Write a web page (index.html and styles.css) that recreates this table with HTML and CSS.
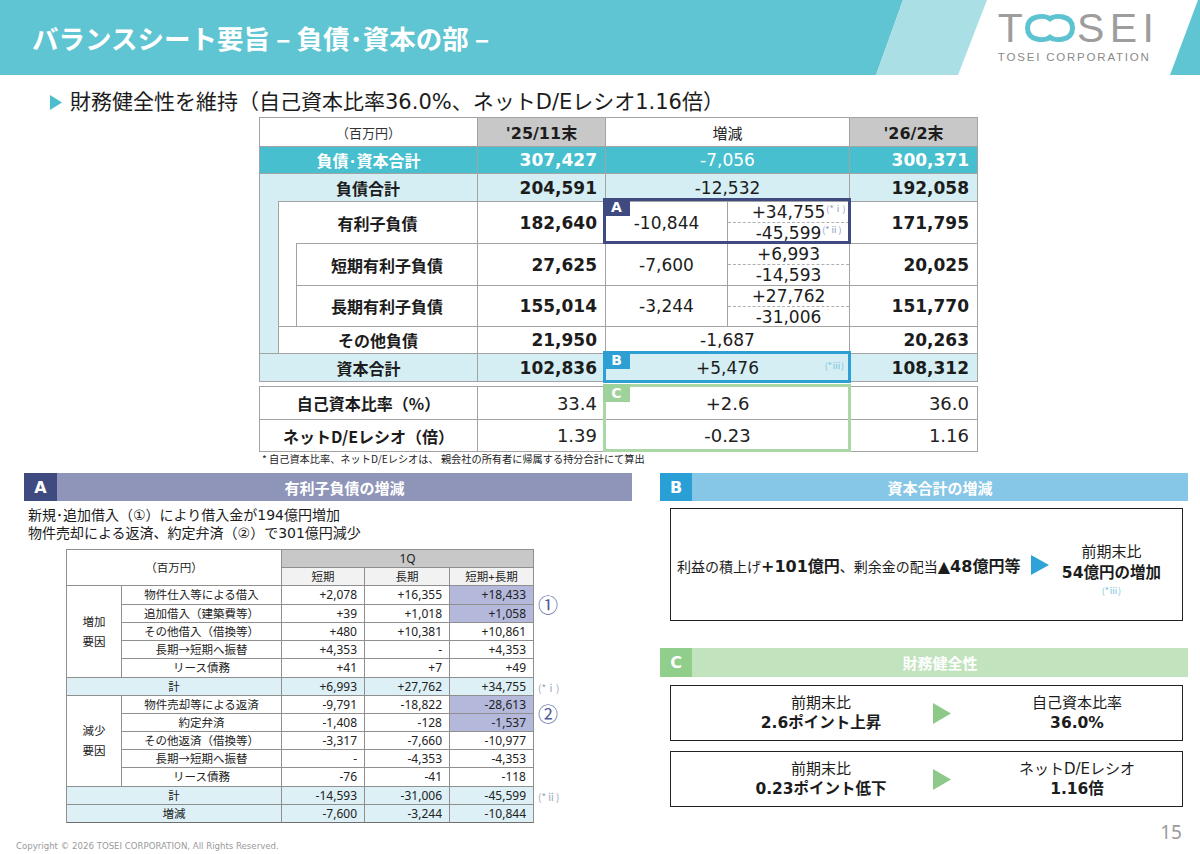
FILE: index.html
```html
<!DOCTYPE html>
<html lang="ja">
<head>
<meta charset="utf-8">
<title>バランスシート要旨 – 負債･資本の部 –</title>
<link rel="stylesheet" href="styles.css">
</head>
<body>
<div class="slide">
  <header class="hdr">
    <svg class="hdr-bg" width="1200" height="75" viewBox="0 0 1200 75" aria-hidden="true">
      <polygon points="0,0 903,0 876,75 0,75" fill="#5fc5d2"/>
      <polygon points="903,0 987,0 958,75 876,75" fill="#aadfe6"/>
      <polygon points="1198,0 1200,0 1200,75 1170,75" fill="#5fc5d2"/>
    </svg>
    <h1 class="title">バランスシート要旨 – 負債･資本の部 –</h1>
    <div class="logo">
      <div class="logo-mark"><span class="lm-t">T</span><svg class="lm-o" width="50" height="30" viewBox="0 0 50 30" aria-hidden="true"><path d="M25 5.8 C30 1.8 47.5 1.8 47.5 15 C47.5 28.2 30 28.2 25 24.2 C20 28.2 2.5 28.2 2.5 15 C2.5 1.8 20 1.8 25 5.8 Z" fill="none" stroke="#5ec3d0" stroke-width="5"/></svg><span class="lm-sei">SEI</span></div>
      <div class="logo-sub">TOSEI CORPORATION</div>
    </div>
  </header>

  <div class="lead"><svg class="lead-tri" width="12" height="15" viewBox="0 0 12 15" aria-hidden="true"><polygon points="0,0 12,7.5 0,15" fill="#4cbfcf"/></svg><span>財務健全性を維持（自己資本比率36.0%、ネットD/Eレシオ1.16倍）</span></div>

  <section class="bs">
    <div class="bsg">
      <div class="c s13 unit">（百万円）</div>
      <div class="c grey hb">'25/11末</div>
      <div class="c s56 hw">増減</div>
      <div class="c grey hb">'26/2末</div>

      <div class="c s13 teal lb">負債･資本合計</div>
      <div class="c teal num b">307,427</div>
      <div class="c teal s56">-7,056</div>
      <div class="c teal num b">300,371</div>

      <div class="c strip1"></div>
      <div class="c s23 lt lb lb-shift1">負債合計</div>
      <div class="c lt num b">204,591</div>
      <div class="c lt s56">-12,532</div>
      <div class="c lt num b">192,058</div>

      <div class="c strip2"></div>
      <div class="c lb lb-shift2">有利子負債</div>
      <div class="c num b">182,640</div>
      <div class="c">-10,844</div>
      <div class="c sub"><div class="sv sv-top"><span class="nv">+34,755<span class="fn">(*ⅰ)</span></span></div><div class="sv"><span class="nv">-45,599<span class="fn">(*ⅱ)</span></span></div></div>
      <div class="c num b">171,795</div>

      <div class="c lb bl">短期有利子負債</div>
      <div class="c num b">27,625</div>
      <div class="c">-7,600</div>
      <div class="c sub"><div class="sv sv-top">+6,993</div><div class="sv">-14,593</div></div>
      <div class="c num b">20,025</div>

      <div class="c lb bl">長期有利子負債</div>
      <div class="c num b">155,014</div>
      <div class="c">-3,244</div>
      <div class="c sub"><div class="sv sv-top">+27,762</div><div class="sv">-31,006</div></div>
      <div class="c num b">151,770</div>

      <div class="c s23 lb bl">その他負債</div>
      <div class="c num b">21,950</div>
      <div class="c s56">-1,687</div>
      <div class="c num b">20,263</div>

      <div class="c s13 lt lb">資本合計</div>
      <div class="c lt num b">102,836</div>
      <div class="c lt s56 rel">+5,476<span class="fn-r">(*ⅲ)</span></div>
      <div class="c lt num b">108,312</div>
    </div>

    <div class="rtg">
      <div class="c lb">自己資本比率（%）</div>
      <div class="c num rv">33.4</div>
      <div class="c rv">+2.6</div>
      <div class="c num rv">36.0</div>
      <div class="c lb">ネットD/Eレシオ（倍）</div>
      <div class="c num rv">1.39</div>
      <div class="c rv">-0.23</div>
      <div class="c num rv">1.16</div>
    </div>
    <p class="note">* 自己資本比率、ネットD/Eレシオは、 親会社の所有者に帰属する持分合計にて算出</p>

    <div class="hl hl-a"><span class="hl-tag">A</span></div>
    <div class="hl hl-b"><span class="hl-tag">B</span></div>
    <div class="hl hl-c"><span class="hl-tag">C</span></div>
  </section>

  <div class="lower">
    <section class="pa">
      <div class="bar bar-a"><span class="tag">A</span><span class="bar-t">有利子負債の増減</span></div>
      <p class="pa-text">新規･追加借入（①）により借入金が194億円増加<br>物件売却による返済、約定弁済（②）で301億円減少</p>
      <div class="st-wrap">
        <div class="st">
          <div class="sc unit2">（百万円）</div>
          <div class="sc q1">1Q</div>
          <div class="sc h2">短期</div>
          <div class="sc h2">長期</div>
          <div class="sc h2">短期+長期</div>

          <div class="sc grp grp1">増加<br>要因</div>
          <div class="sc it">物件仕入等による借入</div><div class="sc v">+2,078</div><div class="sc v">+16,355</div><div class="sc v hi">+18,433</div>
          <div class="sc it">追加借入（建築費等）</div><div class="sc v">+39</div><div class="sc v">+1,018</div><div class="sc v hi">+1,058</div>
          <div class="sc it">その他借入（借換等）</div><div class="sc v">+480</div><div class="sc v">+10,381</div><div class="sc v">+10,861</div>
          <div class="sc it">長期→短期へ振替</div><div class="sc v">+4,353</div><div class="sc v">-</div><div class="sc v">+4,353</div>
          <div class="sc it">リース債務</div><div class="sc v">+41</div><div class="sc v">+7</div><div class="sc v">+49</div>
          <div class="sc it sum s2">計</div><div class="sc v sum">+6,993</div><div class="sc v sum">+27,762</div><div class="sc v sum">+34,755</div>

          <div class="sc grp grp2">減少<br>要因</div>
          <div class="sc it">物件売却等による返済</div><div class="sc v">-9,791</div><div class="sc v">-18,822</div><div class="sc v hi">-28,613</div>
          <div class="sc it">約定弁済</div><div class="sc v">-1,408</div><div class="sc v">-128</div><div class="sc v hi">-1,537</div>
          <div class="sc it">その他返済（借換等）</div><div class="sc v">-3,317</div><div class="sc v">-7,660</div><div class="sc v">-10,977</div>
          <div class="sc it">長期→短期へ振替</div><div class="sc v">-</div><div class="sc v">-4,353</div><div class="sc v">-4,353</div>
          <div class="sc it">リース債務</div><div class="sc v">-76</div><div class="sc v">-41</div><div class="sc v">-118</div>
          <div class="sc it sum s2">計</div><div class="sc v sum">-14,593</div><div class="sc v sum">-31,006</div><div class="sc v sum">-45,599</div>
          <div class="sc it sum s2 last">増減</div><div class="sc v sum last">-7,600</div><div class="sc v sum last">-3,244</div><div class="sc v sum last">-10,844</div>
        </div>
        <div class="anno">
          <div class="an circ an1">①</div>
          <div class="an fnote an2">(*ⅰ)</div>
          <div class="an circ an3">②</div>
          <div class="an fnote an4">(*ⅱ)</div>
        </div>
      </div>
    </section>

    <section class="pbc">
      <div class="bar bar-b"><span class="tag">B</span><span class="bar-t">資本合計の増減</span></div>
      <div class="box boxb">
        <p class="bx-l">利益の積上げ<b>+101億円</b>、剰余金の配当<b>▲48億円等</b></p>
        <svg class="bx-tri" width="18" height="20" viewBox="0 0 18 20" aria-hidden="true"><polygon points="0,0 18,10 0,20" fill="#2fa3d8"/></svg>
        <div class="bx-r">
          <div>前期末比</div>
          <div class="bx-strong">54億円の増加</div>
          <div class="bx-fn">(*ⅲ)</div>
        </div>
      </div>

      <div class="bar bar-c"><span class="tag">C</span><span class="bar-t">財務健全性</span></div>
      <div class="box boxc">
        <div class="cc"><div>前期末比</div><div class="cc-strong">2.6ポイント上昇</div></div>
        <svg class="cc-tri" width="18" height="21" viewBox="0 0 18 21" aria-hidden="true"><polygon points="0,0 18,10.5 0,21" fill="#8dca89"/></svg>
        <div class="cc cc-r"><div>自己資本比率</div><div class="cc-strong">36.0%</div></div>
      </div>
      <div class="box boxc boxc2">
        <div class="cc"><div>前期末比</div><div class="cc-strong">0.23ポイント低下</div></div>
        <svg class="cc-tri" width="18" height="21" viewBox="0 0 18 21" aria-hidden="true"><polygon points="0,0 18,10.5 0,21" fill="#8dca89"/></svg>
        <div class="cc cc-r"><div>ネットD/Eレシオ</div><div class="cc-strong">1.16倍</div></div>
      </div>
    </section>
  </div>

  <footer class="foot">
    <span class="copy">Copyright © 2026 TOSEI CORPORATION, All Rights Reserved.</span>
    <span class="pageno">15</span>
  </footer>
</div>
</body>
</html>
```

FILE: styles.css
```css
:root {
  --ln: #a3a3a3;
  --sl: #8f8f8f;
  --teal: #47bfce;
  --lt: #d4eef3;
  --grey: #c8c8c8;
  --ink: #1c1c1c;
}

* { box-sizing: border-box; }

html, body { margin: 0; padding: 0; }

body {
  width: 1200px;
  height: 854px;
  overflow: hidden;
  background: #fff;
  color: var(--ink);
  font-family: "DejaVu Sans", "Noto Sans CJK JP", sans-serif;
}

.slide {
  width: 1200px;
  height: 854px;
  display: flex;
  flex-direction: column;
}

/* ---------- header ---------- */
.hdr {
  position: relative;
  flex: 0 0 75px;
  display: flex;
  align-items: flex-start;
}

.hdr-bg { position: absolute; left: 0; top: 0; }

.title {
  position: relative;
  margin: 0;
  padding: 21px 0 0 32px;
  font: 700 26.5px/34px "Noto Sans CJK JP", sans-serif;
  color: #fff;
  white-space: nowrap;
}

.logo {
  position: relative;
  margin: 5px 46px 0 auto;
  display: flex;
  flex-direction: column;
}

.logo-mark {
  display: flex;
  align-items: center;
  height: 46px;
  font: 41px/46px "Liberation Sans", sans-serif;
  color: #9d9d9d;
}

.lm-o { margin: 0 2px 0 2px; }

.lm-sei { letter-spacing: 5.5px; margin-right: -5.5px; }

.logo-sub {
  font: 11.5px/13px "Liberation Sans", sans-serif;
  letter-spacing: 1.8px;
  color: #8a8a8a;
  white-space: nowrap;
}

/* ---------- lead ---------- */
.lead {
  flex: 0 0 26px;
  margin-top: 14px;
  display: flex;
  align-items: center;
  padding-left: 50px;
  font-size: 21px;
  line-height: 26px;
  color: var(--ink);
  white-space: nowrap;
}

.lead-tri { margin-right: 8px; flex-shrink: 0; }

/* ---------- balance sheet table ---------- */
.bs {
  position: relative;
  flex-shrink: 0;
  margin: 2px 0 0 259px;
  width: 719px;
}

.bsg {
  display: grid;
  grid-template-columns: 18px 18px 182px 128px 122px 122px 128px;
  grid-template-rows: 29px 27px 28px 42px 42px 41px 27px 28px;
  border-top: 1px solid var(--ln);
  border-left: 1px solid var(--ln);
}

.c {
  display: flex;
  align-items: center;
  justify-content: center;
  border-right: 1px solid var(--ln);
  border-bottom: 1px solid var(--ln);
  font-size: 17px;
  white-space: nowrap;
}

.s13 { grid-column: span 3; }
.s23 { grid-column: span 2; }
.s56 { grid-column: span 2; }

.unit { font: 13px "Noto Sans CJK JP", sans-serif; color: #333; }
.hw { font: 15px "Noto Sans CJK JP", sans-serif; color: #222; }
.grey { background: var(--grey); }
.hb { font-weight: 700; font-size: 16px; }

.teal { background: var(--teal); color: #fff; }
.lt { background: var(--lt); }

.lb { font: 700 16px "Noto Sans CJK JP", sans-serif; }
.lb-shift1 { padding-right: 19px; }
.lb-shift2 { padding-right: 18px; }
.bl { border-left: 1px solid var(--ln); }

.num { justify-content: flex-end; padding-right: 8px; }
.b { font-weight: 700; }

.strip1 {
  grid-column: 1;
  grid-row: 3 / 8;
  background: var(--lt);
  border-right: none;
}

.strip2 {
  grid-column: 2;
  grid-row: 4 / 7;
  border-left: 1px solid var(--ln);
  border-right: none;
}

.sub {
  flex-direction: column;
  align-items: stretch;
}

.sv {
  flex: 1;
  display: flex;
  align-items: center;
  justify-content: center;
  line-height: 20px;
}

.sv-top { border-bottom: 1px dashed #b0b0b0; }

.nv { position: relative; }

.fn {
  position: absolute;
  left: 100%;
  top: 2px;
  margin-left: 1px;
  font: 9px/10px "Noto Sans CJK JP", sans-serif;
  color: #8d9bbd;
}

.rel { position: relative; }

.fn-r {
  position: absolute;
  right: 5px;
  top: 7px;
  font: 9px/10px "Noto Sans CJK JP", sans-serif;
  color: #77c3e3;
}

.rtg {
  margin-top: 4px;
  display: grid;
  grid-template-columns: 218px 128px 244px 128px;
  grid-template-rows: 33px 32px;
  border-top: 1px solid var(--ln);
  border-left: 1px solid var(--ln);
}

.rv { font-size: 18px; color: #222; }

.note {
  margin: 1px 0 0 3px;
  font: 10.2px/12px "Noto Sans CJK JP", sans-serif;
  color: #222;
  white-space: nowrap;
}

.hl {
  position: absolute;
  left: 344px;
  width: 248px;
  border: 3px solid;
}

.hl-a { top: 81px; height: 46px; border-color: #3f4a80; }
.hl-b { top: 234px; height: 32px; border-color: #2e9fd3; }
.hl-c { top: 267px; height: 68px; border-color: #aad8a4; }

.hl-tag {
  position: absolute;
  left: -3px;
  top: -3px;
  width: 27px;
  height: 18px;
  color: #fff;
  font: 700 14px/18px "DejaVu Sans", sans-serif;
  text-align: center;
}

.hl-a .hl-tag { background: #3f4a80; }
.hl-b .hl-tag { background: #2e9fd3; }
.hl-c .hl-tag { background: #9fd29a; }

/* ---------- lower panels ---------- */
.lower {
  display: flex;
  align-items: flex-start;
  gap: 28px;
  margin-top: 8px;
  padding-left: 24px;
  flex-shrink: 0;
}

.pa { width: 608px; }
.pbc { width: 528px; }

.bar { display: flex; height: 28px; }

.tag {
  width: 33px;
  display: flex;
  align-items: center;
  justify-content: center;
  color: #fff;
  font: 700 16px "DejaVu Sans", sans-serif;
}

.bar-t {
  flex: 1;
  display: flex;
  align-items: center;
  justify-content: center;
  color: #fff;
  font: 700 15px "Noto Sans CJK JP", sans-serif;
}

.bar-a { background: #8e95b9; }
.bar-a .tag { background: #3f4a80; }
.bar-b { background: #86c6e6; }
.bar-b .tag { background: #2a9fd6; width: 32px; }
.bar-c { background: #c1e3be; margin-top: 27px; height: 29px; }
.bar-c .tag { background: #8fce8b; width: 32px; }

.pa-text {
  margin: 5px 0 0 4px;
  font-size: 14px;
  line-height: 18px;
  color: var(--ink);
  white-space: nowrap;
}

.st-wrap {
  display: flex;
  align-items: flex-start;
  margin: 7px 0 0 42px;
}

.st {
  display: grid;
  grid-template-columns: 55px 160px 83px 85px 84px;
  grid-template-rows: 18px 18px 19px 18px 18px 18px 19px 18px 18px 18px 18px 18px 19px 18px 18px;
  border-top: 1px solid var(--sl);
  border-left: 1px solid var(--sl);
  font: 12px "Noto Sans", "Noto Sans CJK JP", sans-serif;
  color: #222;
}

.sc {
  display: flex;
  align-items: center;
  justify-content: center;
  border-right: 1px solid var(--sl);
  border-bottom: 1px solid var(--sl);
  white-space: nowrap;
  line-height: 14px;
}

.sc.last { border-bottom-color: #6f6f6f; }

.unit2 { grid-column: 1 / 3; grid-row: 1 / 3; font-size: 11.5px; }
.q1 { grid-column: 3 / 6; grid-row: 1; background: var(--grey); }
.h2 { background: #f2f2f2; font-size: 11.5px; }
.grp { grid-column: 1; font-size: 11.5px; line-height: 20px; text-align: center; }
.grp1 { grid-row: 3 / 8; }
.grp2 { grid-row: 9 / 14; }
.it { font-size: 11.5px; }
.s2 { grid-column: span 2; }
.sum { background: #dcf0f5; }
.v { justify-content: flex-end; padding-right: 7px; }
.hi { background: #b4b9dc; }

.anno {
  display: grid;
  width: 50px;
  margin-top: 1px;
  grid-template-rows: 18px 18px 19px 18px 18px 18px 19px 18px 18px 18px 18px 18px 19px 18px 18px;
}

.an { display: flex; align-items: center; padding-left: 4px; white-space: nowrap; }
.circ { font: 20px/20px "Noto Sans CJK JP", sans-serif; color: #4d5b98; }
.fnote { font: 10px "Noto Sans CJK JP", sans-serif; color: #9aa3b8; }
.an1 { grid-row: 3 / 5; }
.an2 { grid-row: 8; }
.an3 { grid-row: 9 / 11; }
.an4 { grid-row: 14; }

.box {
  margin-left: 10px;
  width: 513px;
  border: 1.5px solid #222;
  background: #fff;
}

.boxb {
  margin-top: 7px;
  height: 113px;
  display: flex;
  align-items: center;
  padding-left: 6px;
}

.bx-l {
  margin: 0;
  font-size: 14px;
  white-space: nowrap;
}

.bx-l b { font-size: 16px; font-weight: 700; }

.bx-tri { margin-left: 11px; flex-shrink: 0; }

.bx-r {
  width: 124px;
  padding-top: 10px;
  text-align: center;
  font-size: 15px;
  line-height: 21px;
}

.bx-strong { font-weight: 700; font-size: 15.5px; }

.bx-fn {
  font: 9px/14px "Noto Sans CJK JP", sans-serif;
  color: #7cc2e2;
}

.boxc {
  margin-top: 8px;
  height: 56px;
  display: grid;
  grid-template-columns: 224px 18px 1fr;
  align-items: center;
  padding-left: 38px;
}

.boxc2 { margin-top: 10px; }

.cc {
  text-align: center;
  font-size: 15px;
  line-height: 20px;
  white-space: nowrap;
}

.cc-r { padding-left: 21px; }

.cc-strong { font-weight: 700; font-size: 15.5px; }

/* ---------- footer ---------- */
.foot {
  margin-top: auto;
  height: 31px;
  display: flex;
  justify-content: space-between;
  align-items: flex-start;
  padding: 0 18px 0 16px;
  flex-shrink: 0;
}

.copy {
  margin-top: 17px;
  font: 8.6px/12px "DejaVu Sans", sans-serif;
  color: #9a9a9a;
  white-space: nowrap;
}

.pageno {
  margin-top: -2px;
  font: 19px/22px "Noto Sans", sans-serif;
  color: #9a9a9a;
}
```
